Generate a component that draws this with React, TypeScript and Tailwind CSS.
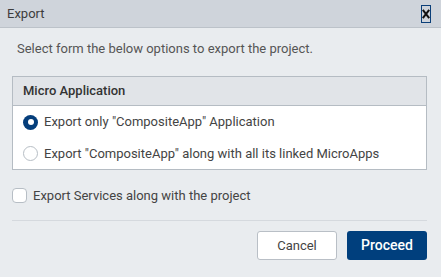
import React from "react";

export default function App() {
  return (
    <div
      className="w-[441px] h-[277px] bg-[#e9ecef] flex flex-col overflow-hidden"
      style={{ fontFamily: "Roboto, 'Liberation Sans', sans-serif" }}
    >
      <div className="h-[28px] shrink-0 bg-[#cfd4db] border-b border-[#bcc2c9] flex items-center justify-between pl-[7px] pr-[10px]">
        <span className="text-[13px] text-[#3d3d3d] leading-none">Export</span>
        <span className="w-[10px] h-[18px] border border-[#0b3f78] flex items-center justify-center">
          <svg width="8" height="10" viewBox="0 0 8 10">
            <path d="M0.8 0.8 L7.2 9.2 M7.2 0.8 L0.8 9.2" stroke="#111" strokeWidth="2" />
          </svg>
        </span>
      </div>
      <div className="flex flex-col pl-[12px] pr-[14px]">
        <p className="mt-[13px] h-[16px] leading-[16px] pl-[5px] text-[13px] text-[#555]">
          Select form the below options to export the project.
        </p>
        <div className="mt-[19px] border border-[#b5bcc3] bg-white">
          <div className="h-[29px] bg-[#e1e4e8] border-b border-[#b5bcc3] flex items-center px-[10px]">
            <span className="text-[13px] font-medium text-[#333]">Micro Application</span>
          </div>
          <div className="h-[32px] flex items-center px-[10px] gap-[6px]">
            <span className="w-[15px] h-[15px] rounded-full bg-[#053e7b] flex items-center justify-center">
              <span className="w-[6px] h-[6px] rounded-full bg-white" />
            </span>
            <span className="text-[13px] text-[#444]">Export only "CompositeApp" Application</span>
          </div>
          <div className="h-[31px] flex items-center px-[10px] gap-[6px]">
            <span className="w-[15px] h-[15px] rounded-full bg-white border border-[#b7bec5]" />
            <span className="text-[13px] text-[#444]">Export "CompositeApp" along with all its linked MicroApps</span>
          </div>
        </div>
        <div className="mt-[18px] h-[15px] flex items-center gap-[6px]">
          <span className="w-[15px] h-[15px] rounded-[4px] bg-white border border-[#b7bec5]" />
          <span className="text-[13px] text-[#444]">Export Services along with the project</span>
        </div>
        <div className="mt-[17px] h-px bg-[#d5d9de]" />
        <div className="mt-[10px] flex justify-end gap-[10px]">
          <button className="w-[80px] h-[29px] bg-white border border-[#b9bfc6] rounded-[3px] text-[13px] text-[#444]">
            Cancel
          </button>
          <button className="w-[80px] h-[29px] bg-[#003f7d] rounded-[3px] text-[14px] font-medium text-white">
            Proceed
          </button>
        </div>
      </div>
    </div>
  );
}
